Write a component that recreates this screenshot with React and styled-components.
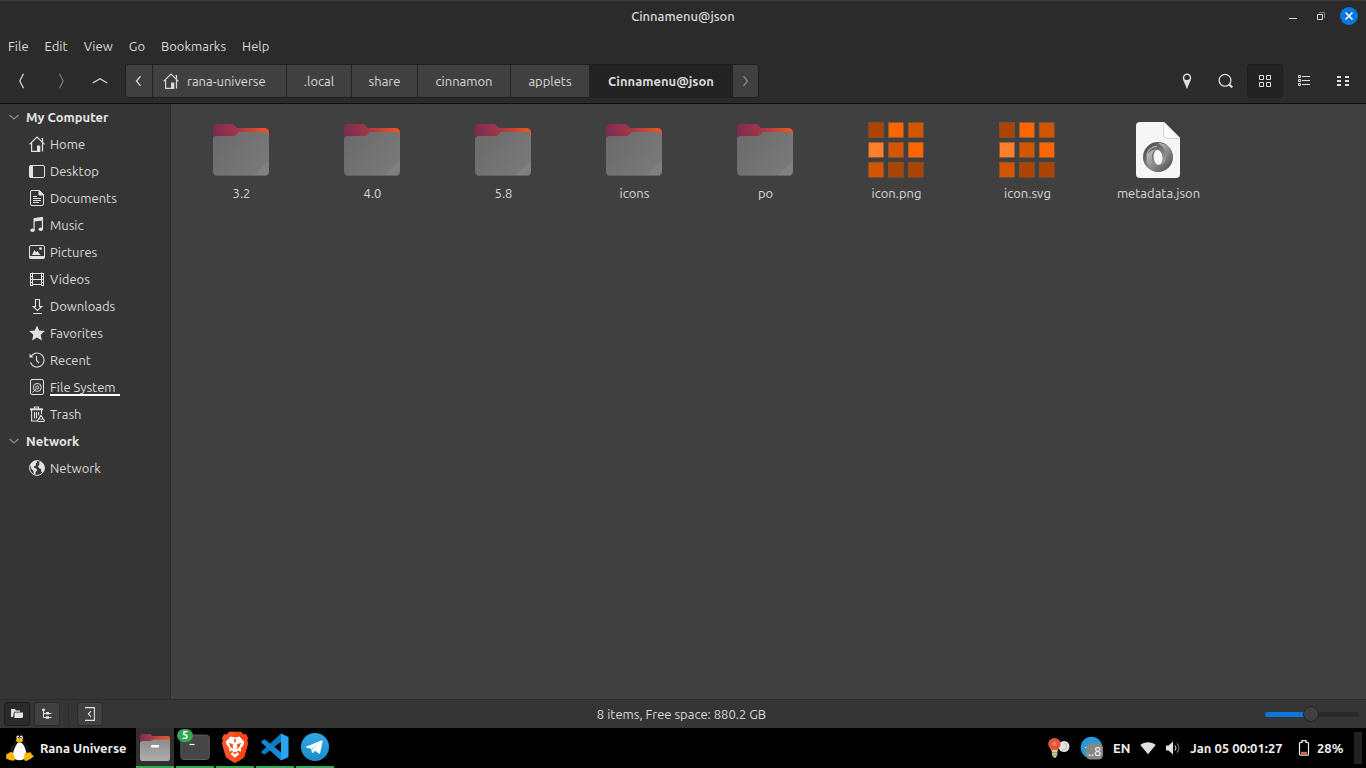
import React, { useState } from "react";
import styled, { createGlobalStyle, css } from "styled-components";

const GlobalStyle = createGlobalStyle`
  *, *::before, *::after { box-sizing: border-box; }
  body {
    margin: 0;
    background: #404040;
    color: #dadada;
    font-family: "Ubuntu", "Noto Sans", sans-serif;
    font-size: 13px;
    line-height: 20px;
  }
  button, input { font: inherit; color: inherit; }
  button { border: 0; padding: 0; background: none; cursor: default; }
  a { color: inherit; text-decoration: none; cursor: default; }
  svg { display: block; flex: none; }
`;

const Desktop = styled.div`
  display: flex;
  flex-direction: column;
  min-height: 100vh;
`;

const Header = styled.header`
  background: #2b2b2b;
  border-top: 1px solid #3a3a3a;
  border-bottom: 1px solid #0e0e0e;
`;

const TitleBar = styled.div`
  display: grid;
  grid-template-columns: 1fr auto 1fr;
  align-items: center;
  height: 31px;
  padding: 0 8px 1px;
`;

const WindowTitle = styled.h1`
  grid-column: 2;
  margin: 0;
  font-size: 13px;
  font-weight: 500;
  line-height: 20px;
`;

const WindowControls = styled.div`
  display: flex;
  justify-content: flex-end;
  gap: 10px;
`;

const WindowButton = styled.button`
  display: grid;
  place-items: center;
  width: 18px;
  height: 18px;
  border-radius: 50%;
  background: ${(p) => (p.$close ? "#0c75de" : "transparent")};
`;

const MenuBar = styled.nav`
  display: flex;
  align-items: center;
  height: 28px;
  padding: 0 8px;
  gap: 16px;
`;

const MenuButton = styled.button`
  text-align: left;
  white-space: nowrap;
`;

const Toolbar = styled.div`
  display: flex;
  align-items: center;
  height: 43px;
  padding: 0 5px 2px 4px;
`;

const ToolGroup = styled.div`
  display: flex;
  gap: 3px;
`;

const ToolButton = styled.button`
  display: grid;
  place-items: center;
  width: 36px;
  height: 34px;
  border: 1px solid ${(p) => (p.$on ? "#1f1f1f" : "transparent")};
  border-radius: 3px;
  background: ${(p) => (p.$on ? "#232323" : "transparent")};
  color: ${(p) => (p.disabled ? "#7d7d7d" : "#dedede")};
`;

const Breadcrumb = styled.nav`
  display: flex;
  height: 34px;
  margin: 0 auto 0 7px;
  border: 1px solid #1f1f1f;
  border-radius: 3px;
  overflow: hidden;
`;

const Crumb = styled.button`
  display: flex;
  align-items: center;
  justify-content: ${(p) => (p.$icon ? "flex-start" : "center")};
  gap: 8px;
  width: ${(p) => p.$width}px;
  padding-left: ${(p) => (p.$icon ? 10 : 0)}px;
  background: ${(p) => (p.$current ? "#232323" : "#404040")};
  font-weight: ${(p) => (p.$current ? 700 : 400)};
  color: ${(p) => (p.disabled ? "#8c8c8c" : "#dadada")};
  white-space: nowrap;
  & + & { border-left: 1px solid #232323; }
`;

const Workspace = styled.div`
  display: flex;
  flex: 1;
`;

const Sidebar = styled.aside`
  flex: none;
  width: 171px;
  border-right: 1px solid #2b2b2b;
  background: #353535;
`;

const SideHeading = styled.h2`
  display: flex;
  align-items: center;
  gap: 6px;
  height: 27px;
  margin: 0;
  padding: 0 0 1px 8px;
  font-size: 13px;
  font-weight: 700;
  color: #e4e4e4;
  svg { color: #8f8f8f; }
`;

const PlaceList = styled.ul`
  margin: 0;
  padding: 0;
  list-style: none;
`;

const PlaceLink = styled.a`
  display: flex;
  align-items: center;
  gap: 5px;
  height: 27px;
  padding: 0 0 1px 29px;
  svg { color: #e2e2e2; }
`;

const PlaceName = styled.span`
  ${(p) =>
    p.$usage &&
    css`
      width: 70px;
      height: 18px;
      line-height: 18px;
      border-bottom: 2px solid #ffffff;
    `}
`;

const FileGrid = styled.main`
  flex: 1;
  display: grid;
  grid-template-columns: repeat(auto-fill, 131px);
  align-content: start;
  padding: 14px 5px;
  background: #404040;
`;

const FileItem = styled.a`
  display: flex;
  flex-direction: column;
  align-items: center;
  gap: 1px;
  height: 90px;
  svg { margin-right: 1px; }
`;

const StatusBar = styled.footer`
  display: grid;
  grid-template-columns: 1fr auto 1fr;
  align-items: center;
  height: 29px;
  padding: 0 7px 0 4px;
  border-top: 1px solid #2d2d2d;
  background: #353535;
`;

const StatusTools = styled.div`
  display: flex;
  align-items: center;
  gap: 4px;
`;

const StatusButton = styled.button`
  display: grid;
  place-items: center;
  width: 26px;
  height: 24px;
  border: 1px solid ${(p) => (p.$on ? "#1c1c1c" : "#292929")};
  border-radius: 3px;
  background: ${(p) => (p.$on ? "#2b2b2b" : "#404040")};
  color: #e2e2e2;
`;

const Separator = styled.span`
  width: 1px;
  height: 23px;
  margin: 0 4px;
  background: #2d2d2d;
`;

const ZoomSlider = styled.input`
  justify-self: end;
  appearance: none;
  width: 94px;
  height: 16px;
  margin: 0;
  background: transparent;
  &::-webkit-slider-runnable-track {
    height: 5px;
    border-radius: 3px;
    background: linear-gradient(to right, #0c75de 50%, #292929 50%);
  }
  &::-webkit-slider-thumb {
    appearance: none;
    width: 16px;
    height: 16px;
    margin-top: -6px;
    border: 1px solid #222222;
    border-radius: 50%;
    background: #404040;
  }
`;

const Panel = styled.div`
  display: flex;
  justify-content: space-between;
  height: 40px;
  background: #000000;
  color: #ededed;
  font-weight: 600;
`;

const PanelStart = styled.div`
  display: flex;
  gap: 2px;
`;

const StartButton = styled.button`
  display: flex;
  align-items: center;
  gap: 5px;
  width: 134px;
  padding-left: 5px;
  font-weight: 600;
  white-space: nowrap;
`;

const TaskButton = styled.button`
  position: relative;
  display: grid;
  place-items: center;
  width: 38px;
  border-bottom: 2px solid #35a854;
  background: ${(p) => (p.$active ? "#303030" : "transparent")};
`;

const WindowCount = styled.span`
  position: absolute;
  top: 1px;
  left: 1px;
  width: 16px;
  height: 13px;
  border-radius: 7px;
  background: #35a854;
  color: #ffffff;
  font-size: 11px;
  line-height: 13px;
  text-align: center;
`;

const Tray = styled.div`
  display: flex;
  align-items: center;
  gap: 9px;
  padding-right: 4px;
`;

const TrayText = styled.span`
  width: ${(p) => p.$width}px;
  white-space: nowrap;
`;

const TrayButton = styled.button`
  display: flex;
  align-items: center;
  gap: 7px;
  font-weight: 600;
  text-align: left;
`;

const ShowDesktop = styled.button`
  width: 8px;
  height: 32px;
  background: #222222;
`;

/* ---------- symbolic icons ---------- */

const Line = ({ w = 16, h = 16, sw = 1.2, children, ...rest }) => (
  <svg
    width={w}
    height={h}
    viewBox={`0 0 ${w} ${h}`}
    fill="none"
    stroke="currentColor"
    strokeWidth={sw}
    aria-hidden="true"
    {...rest}
  >
    {children}
  </svg>
);

const HomeIcon = () => (
  <Line>
    <path d="M.5 8.400 8 1l7.500 7.400M12.500 2.500h1v3.500" />
    <path d="M2.600 6.800v8.600h5.900M13.500 6.800v8.700" />
    <path d="M8 9.500h3.300V16H8z" fill="currentColor" stroke="none" />
  </Line>
);

const DesktopIcon = () => (
  <Line sw={1}>
    <rect x=".5" y="2.500" width="15" height="12" rx="1.500" />
    <path d="M2 2h2v13H2a1.500 1.500 0 0 1-1.500-1.500v-10A1.500 1.500 0 0 1 2 2z" fill="currentColor" stroke="none" />
  </Line>
);

const DocumentIcon = () => (
  <Line sw={1}>
    <path d="M3 .5h7.500l4 4V14a1.500 1.500 0 0 1-1.500 1.500H3A1.500 1.500 0 0 1 1.500 14V2A1.500 1.500 0 0 1 3 .5z" />
    <path d="M10 .5v4.500h4.500z" fill="currentColor" />
    <path d="M4 6.500h4M4 8.500h8M4 10.500h8M4 12.500h6" />
  </Line>
);

const MusicIcon = () => (
  <Line sw={1.2}>
    <path d="M5.100 13V1.800l8.300-1.300V12" />
    <path d="M5 1.300 14 .2v3.300L5 4.600z" fill="currentColor" stroke="none" />
    <ellipse cx="3.500" cy="13.300" rx="2.200" ry="1.800" fill="currentColor" stroke="none" />
    <ellipse cx="11.800" cy="12.200" rx="2.200" ry="1.800" fill="currentColor" stroke="none" />
  </Line>
);

const PictureIcon = () => (
  <Line sw={1}>
    <rect x=".5" y="1.500" width="15" height="12.500" rx="1.500" />
    <path d="M.5 12.500h15v1a1 1 0 0 1-1 1h-13a1 1 0 0 1-1-1z" fill="currentColor" />
    <path d="m3 11 2.500-5 1.700 2.200L8.500 7l3 4z" fill="currentColor" stroke="none" />
    <circle cx="11.500" cy="4.600" r="1.400" fill="currentColor" stroke="none" />
  </Line>
);

const VideoIcon = () => (
  <Line sw={1}>
    <path d="M3.500 1.500v13M12.500 1.500v13M3.500 2.500h9M3.500 8.500h9M3.500 13.500h9" />
    <path d="M1.500 2v13M14.500 2v13" />
    <path d="M1 2.500h3M1 5.500h3M1 8.500h3M1 11.500h3M1 14.500h3M12 2.500h3M12 5.500h3M12 8.500h3M12 11.500h3M12 14.500h3" />
  </Line>
);

const DownloadIcon = () => (
  <Line sw={1.1}>
    <path d="M6.500 1.500h4v7h2.300l-4.300 4-4.300-4h2.300zM4 15.500h9" />
  </Line>
);

const StarIcon = () => (
  <Line>
    <path d="m8 .4 2.200 5 5.600.6-4.100 3.800 1.200 5.700L8 12.600l-4.900 2.900 1.200-5.700L.2 6l5.600-.6z" fill="currentColor" stroke="none" />
  </Line>
);

const RecentIcon = () => (
  <Line sw={1.1}>
    <path d="M2.500 3.800A7 7 0 1 1 1.500 10.500" />
    <path d="M.5 1.800v3.700h4z" fill="currentColor" stroke="none" />
    <path d="M7.500 4v4.500l2.500 2.500" />
  </Line>
);

const DiskIcon = () => (
  <Line sw={1}>
    <rect x="1.500" y=".5" width="13" height="15" rx="1.500" />
    <circle cx="8.300" cy="8.400" r="4" />
    <circle cx="8.300" cy="8.400" r="1.500" />
    <path d="m3.500 13.500 3.300-3.300" />
  </Line>
);

const TrashIcon = () => (
  <Line sw={1.1}>
    <path d="M5.500 2.800V1h4v1.800" />
    <path d="M1 2.300h13v2H1z" fill="currentColor" stroke="none" />
    <path d="M2.600 4v11h5.600M12.500 4v4M5.500 6v6.500M7.500 6v6.500M9.600 6v3.500" />
    <path d="m12 9.200 1.800 3 1.700 2.500-1 .9H9.300l-.8-1 1.600-2.600zM9.500 12.500l2 .7M13.800 12.200l-1.400 1.500" />
  </Line>
);

const GlobeIcon = () => (
  <Line sw={1}>
    <circle cx="8" cy="8" r="7.400" />
    <path d="M1.200 5C2.300 2.500 4.800.8 7.500.8l.7 1.600-1.500 1.200.6 1.300-1.900 1.300-.5 1.500 2.300.7 1 1.800-1.500 1.700-.4 2.700-1.500-.7-.3-3-2-2z" fill="currentColor" stroke="none" />
    <path d="m10 2.300 2.300-.3c2 1.300 3.200 3.600 3.200 6 0 1.900-.8 3.700-2 5l-1.300-1.500-.2-2.500-2-.7-1-2 1.400-1.600z" fill="currentColor" stroke="none" />
  </Line>
);

const ExpanderIcon = () => (
  <Line w={12} h={12} sw={1.1}>
    <path d="m1.500 4 4.500 4 4.500-4" />
  </Line>
);

const BackIcon = () => (
  <Line sw={1.2}>
    <path d="M9.500.8 5.800 8l3.700 7.200" />
  </Line>
);
const ForwardIcon = () => (
  <Line sw={1.2}>
    <path d="M6.500.8 10.200 8l-3.700 7.200" />
  </Line>
);
const UpIcon = () => (
  <Line sw={1.2}>
    <path d="M.8 10 8 5.800l7.200 4.200" />
  </Line>
);
const CrumbBackIcon = () => (
  <Line w={10} h={12} sw={1.3}>
    <path d="M6.500 1.200 2.500 6l4 4.800" />
  </Line>
);
const CrumbNextIcon = () => (
  <Line w={10} h={12} sw={1.2}>
    <path d="m2.500 1.200 4 4.800-4 4.800" />
  </Line>
);

const PinIcon = () => (
  <Line>
    <path d="M8 .5a4.200 4.200 0 0 1 4.200 4.300C12.200 8 9.500 11 8.500 15.500h-1C6.500 11 3.800 8 3.800 4.800A4.200 4.200 0 0 1 8 .5zM8 2a2.700 2.700 0 0 0-2.700 2.700C5.300 6 6 7 8 7s2.700-1 2.700-2.300A2.700 2.700 0 0 0 8 2z" fill="currentColor" stroke="none" fillRule="evenodd" />
  </Line>
);

const SearchIcon = () => (
  <Line sw={1.3}>
    <circle cx="7" cy="7.300" r="5.900" />
    <path d="m11.300 11.500 3 3" strokeWidth="2" />
  </Line>
);

const GridIcon = () => (
  <Line sw={1}>
    <path d="M2.500 2.500h4v4h-4zM9.500 2.500h4v4h-4zM2.500 9.500h4v4h-4zM9.500 9.500h4v4h-4z" />
  </Line>
);

const ListIcon = () => (
  <Line sw={1}>
    <path d="M2.500 2.500h2v2h-2zM2.500 6.500h2v2h-2zM2.500 10.500h2v2h-2zM6 3.500h8M6 7.500h8M6 11.500h8" />
  </Line>
);

const CompactIcon = () => (
  <Line sw={2}>
    <path d="M2 4h4M2 8h4M2 12h4M10 4h4M10 8h4M10 12h4" />
  </Line>
);

const MinimizeIcon = () => (
  <Line w={10} h={10}>
    <path d="M1 7h8v1H1z" fill="currentColor" stroke="none" />
  </Line>
);
const RestoreIcon = () => (
  <Line w={10} h={10} sw={1}>
    <path d="M1.500 3.500h5v5h-5z" />
    <path d="M3 1.500h5.500V7" stroke="#848484" />
  </Line>
);
const CloseIcon = () => (
  <Line w={10} h={10} sw={1.5}>
    <path d="m1.500 1.500 7 7M8.500 1.500l-7 7" stroke="#ffffff" />
  </Line>
);

const PlacesIcon = () => (
  <Line w={12} h={12}>
    <path d="M0 1h4l1 1.500h4v1.200H3L2 9H0z" fill="currentColor" stroke="none" />
    <path d="M3.500 4.500H12V9l-.8 1H3.300z" fill="currentColor" stroke="none" />
  </Line>
);
const TreeIcon = () => (
  <Line w={12} h={12} sw={1}>
    <path d="M2.500 1v8.500H5M2.500 5.500H5M6 5.500h4.500M6 9.500h4.500" />
    <path d="M1 .8h3v2H1zM5 4h3v2.500H5zM5 8.200h3v2.500H5z" fill="currentColor" stroke="none" />
  </Line>
);
const HidePaneIcon = () => (
  <Line w={12} h={14} sw={1.1}>
    <path d="M1 .6h9.400v12.800H1M7 4.200 4.300 7 7 9.800" />
  </Line>
);

/* ---------- file icons ---------- */

const FolderIcon = () => (
  <svg width="64" height="64" viewBox="0 0 64 64" aria-hidden="true">
    <defs>
      <linearGradient id="folderBack" x1="4" y1="22" x2="60" y2="8" gradientUnits="userSpaceOnUse">
        <stop offset="0" stopColor="#772953" />
        <stop offset=".45" stopColor="#a23748" />
        <stop offset="1" stopColor="#f05a22" />
      </linearGradient>
      <linearGradient id="folderFront" x1="4" y1="16" x2="60" y2="58" gradientUnits="userSpaceOnUse">
        <stop offset="0" stopColor="#6a6a6a" />
        <stop offset="1" stopColor="#7b7b7b" />
      </linearGradient>
    </defs>
    <path d="M8 6h14.500c1.600 0 2.300.7 3.200 1.800L28 10h27.500a4.500 4.500 0 0 1 4.500 4.500V28H4V10a4 4 0 0 1 4-4z" fill="url(#folderBack)" />
    <path d="M7.500 18H24c1.500 0 2.400-.4 3.300-1.300l1.500-1.500c.9-.8 1.700-1.200 3-1.200h23.700a4.500 4.500 0 0 1 4.500 4.500v35a4.500 4.500 0 0 1-4.500 4.500h-47A4.500 4.500 0 0 1 4 53.500v-32A3.500 3.500 0 0 1 7.500 18z" fill="url(#folderFront)" />
    <path d="M60 42v11.500a4.500 4.500 0 0 1-4.500 4.500H44z" fill="#808080" />
    <path d="M4 53.300A4.500 4.500 0 0 0 8.500 57.600h47a4.500 4.500 0 0 0 4.500-4.300" fill="none" stroke="#5c5c5c" strokeWidth=".8" />
  </svg>
);

const TILE_COLORS = [
  "#aa4400", "#ff6600", "#d45500",
  "#ff7f2a", "#d45500", "#ff6600",
  "#d45500", "#aa4400", "#aa4400",
];

const TilesIcon = () => (
  <svg width="64" height="64" viewBox="0 0 64 64" aria-hidden="true">
    {TILE_COLORS.map((color, i) => (
      <rect
        key={i}
        x={4.6 + (i % 3) * 19.8}
        y={4.6 + Math.floor(i / 3) * 19.8}
        width="15"
        height="15"
        fill={color}
        stroke="#8a5a35"
        strokeWidth=".5"
      />
    ))}
  </svg>
);

const JsonIcon = () => (
  <svg width="64" height="64" viewBox="0 0 64 64" aria-hidden="true">
    <defs>
      <linearGradient id="jsonA" x1="20" y1="28" x2="42" y2="52" gradientUnits="userSpaceOnUse">
        <stop offset="0" stopColor="#4c4c4c" />
        <stop offset="1" stopColor="#b5b5b5" />
      </linearGradient>
      <linearGradient id="jsonB" x1="44" y1="48" x2="24" y2="28" gradientUnits="userSpaceOnUse">
        <stop offset="0" stopColor="#5c5c5c" />
        <stop offset="1" stopColor="#c8c8c8" />
      </linearGradient>
    </defs>
    <path d="M14 4h24l16 16v36a4 4 0 0 1-4 4H14a4 4 0 0 1-4-4V8a4 4 0 0 1 4-4z" fill="#f6f6f6" />
    <path d="M38 4l16 16H42a4 4 0 0 1-4-4z" fill="#fdfdfd" />
    <path d="M37.700 4v12a4.300 4.300 0 0 0 4.300 4.300h12" fill="none" stroke="#cfcfcf" strokeWidth=".9" />
    <circle cx="32" cy="39" r="15" fill="url(#jsonA)" />
    <path d="M32 31c-4 0-6 4-6 8s2.500 8.500 6 8.500 8.500-3 8.500-9c0-5-3-10-8.500-13.500 8 0 15 5.500 15 14S40 54 32 54s-11.500-7-11.500-13C20.500 35 26 31 32 31z" fill="url(#jsonB)" />
    <path d="M21 38c0-5.500 4.500-9.700 10-9.700" fill="none" stroke="#b0b0b0" strokeWidth="1.200" />
    <ellipse cx="32" cy="39.300" rx="4.400" ry="7.600" fill="#f6f6f6" transform="rotate(-6 32 39)" />
  </svg>
);

/* ---------- panel icons ---------- */

const PenguinIcon = () => (
  <svg width="30" height="30" viewBox="0 0 30 30" aria-hidden="true">
    <path d="M11 5c0-3 1.500-4.500 4-4.500S19 2.500 19 5.500c0 3 6 8 6 15 0 4-4 7-9.500 7S6 25 6 20C6 13 11 9 11 5z" fill="#111111" />
    <path d="M14.500 9.500c3 0 4 2 5.200 5 1.400 3.600 2.300 6.500 1 9.500-1 2.400-3.700 3.200-6.200 3.200S9.300 26.400 8.300 24c-1-2.700.2-6.500 1.700-9.500 1.400-2.800 2-5 4.500-5z" fill="#ffffff" />
    <ellipse cx="12.800" cy="4.400" rx="1.400" ry="1.900" fill="#e9e9e9" />
    <ellipse cx="16.300" cy="4.400" rx="1.500" ry="2" fill="#e9e9e9" />
    <circle cx="13.200" cy="4.600" r=".7" fill="#000000" />
    <circle cx="16" cy="4.600" r=".7" fill="#000000" />
    <path d="M10.800 7c1.200-1.300 2.200-1.800 3.600-1.800 1.500 0 3 .8 4 1.800-.9 1.800-2.400 2.800-4 2.800S11.500 8.800 10.800 7z" fill="#f5b400" />
    <path d="M3 20.500c1.500-.6 2.500-2 3.700-1.600C8.200 19.500 9.600 23 10 25c.4 2-1 3-3 2.600-2-.4-4-1.200-5.200-1.500-1-.3-.6-1.700-.5-2.600.1-1-.8-2.400 1.700-3z" fill="#f9b903" />
    <path d="M19.600 21c.2-2 1.500-1.700 2.600-1.300 1.400.5 2.400-.3 3.300-.4 1.200.8.700 1.700 1.500 2.400.8.700 2 1 1.600 1.800-1 1.500-4.600 3-6.100 4-1.700 1-3.400.2-3.400-1.800 0-1.600.4-3.200.5-4.700z" fill="#f9b903" />
    <path d="M8.500 12c-1.500 2.300-2.500 4-2.600 6" stroke="#444444" strokeWidth=".7" fill="none" />
  </svg>
);

const FilesIcon = () => (
  <svg width="32" height="30" viewBox="0 0 32 30" aria-hidden="true">
    <defs>
      <linearGradient id="filesBack" x1="0" x2="1">
        <stop offset="0" stopColor="#7b2b52" />
        <stop offset="1" stopColor="#ee5825" />
      </linearGradient>
      <linearGradient id="filesFront" x2="0" y2="1">
        <stop offset="0" stopColor="#8d8d8d" />
        <stop offset="1" stopColor="#aeaeae" />
      </linearGradient>
    </defs>
    <path d="M3 2h8.500l2 2H29a2 2 0 0 1 2 2v6H1V4a2 2 0 0 1 2-2z" fill="url(#filesBack)" />
    <path d="M3.500 9H12l2-1.500h14.500A2.500 2.500 0 0 1 31 10v16.500a2.500 2.500 0 0 1-2.500 2.500h-25A2.500 2.500 0 0 1 1 26.500v-15A2.500 2.500 0 0 1 3.500 9z" fill="url(#filesFront)" />
    <rect x="12" y="13" width="8" height="2.500" rx=".7" fill="#ffffff" />
  </svg>
);

const TerminalIcon = () => (
  <svg width="30" height="28" viewBox="0 0 30 28" aria-hidden="true">
    <rect x=".8" y="2" width="28.500" height="24.500" rx="3" fill="#464646" stroke="#5b5b5b" />
    <path d="M9.500 11.500h5" stroke="#ffffff" strokeWidth="1.200" />
  </svg>
);

const BraveIcon = () => (
  <svg width="28" height="32" viewBox="0 0 28 32" aria-hidden="true">
    <path d="m8 .8 12 0 2.400 2.800 2.600-.3 2 3.700-.8 2.700.9 2.600-3.700 13.300c-.4 1.400-4.700 4-9.400 6.400-4.700-2.400-9-5-9.400-6.400L.9 12.300l.9-2.600L1 7l2-3.700 2.600.3z" fill="#fb542b" />
    <path d="M14 .8h6l2.400 2.800 2.600-.3 2 3.700-.8 2.700.9 2.600-3.700 13.300c-.4 1.400-4.700 4-9.400 6.400z" fill="#ff3a08" opacity=".65" />
    <path d="m9.500 5.500 4.500 1 4.500-1 4.800 5.300-.7 3.200-2.800 3.400.5 1.800-1 1.500-2.300-1.200-1.200 1.200 2.500 2.300-4.300 3.700-4.300-3.700 2.500-2.300-1.200-1.200L9 20.500 8 19l.5-1.800-2.800-3.400-.9-3z" fill="#ffffff" />
    <path d="m8 11.800 4.300 1.700-.8 1.800 1 3-3-2.300zM20 11.800l-4.300 1.700.8 1.800-1 3 3-2.300z" fill="#fb4a20" />
    <path d="m11.500 21.800 2.500-1.100 2.500 1.100-2.500 1.400z" fill="#fb4a20" />
    <path d="m12.900 8 1.100.6 1.100-.6-.5 3.500h-1.200z" fill="#fb4a20" />
  </svg>
);

const CodeIcon = () => (
  <svg width="30" height="30" viewBox="0 0 30 30" aria-hidden="true">
    <path d="M21 1.500 1.600 19.200a1 1 0 0 0 0 1.500L3.400 22.300c.4.4 1 .4 1.400.1L21.300 9.500z" fill="#0b78c2" />
    <path d="M21 28.500 1.600 10.800a1 1 0 0 1 0-1.500L3.400 7.700c.4-.4 1-.4 1.400-.1l16.500 12.900z" fill="#1487d4" />
    <path d="M21 1.500 28.500 5v20L21 28.500z" fill="#2ba5ef" />
  </svg>
);

const TelegramIcon = () => (
  <svg width="30" height="30" viewBox="0 0 30 30" aria-hidden="true">
    <defs>
      <linearGradient id="tgBlue" x2="0" y2="1">
        <stop offset="0" stopColor="#2fa9e2" />
        <stop offset="1" stopColor="#1c8ccb" />
      </linearGradient>
    </defs>
    <circle cx="15" cy="15" r="14" fill="url(#tgBlue)" />
    <path d="m6 14.800 15.300-6.200c.8-.3 1.400.2 1.200 1.100L20.200 20.800c-.2.9-.8 1.100-1.500.7L15 18.800l-2 1.900c-.5.4-.9.300-1-.4l-.9-3.600-4.900-1.200c-.7-.2-.7-.5-.2-.7z" fill="#ffffff" />
    <path d="m11.200 16.700 7.700-5.200-6.200 6-.7 3z" fill="#b7d8ee" />
  </svg>
);

const BulbIcon = () => (
  <svg width="23" height="22" viewBox="0 0 23 22" aria-hidden="true">
    <defs>
      <radialGradient id="bulbRed" cx=".5" cy=".45" r=".55">
        <stop offset="0" stopColor="#f0907c" />
        <stop offset=".55" stopColor="#dd4a30" />
        <stop offset="1" stopColor="#f0714f" />
      </radialGradient>
    </defs>
    <circle cx="16" cy="9.500" r="5.500" fill="#e3e3e1" />
    <path d="m16 6 3 2-1 4-4 1" stroke="#bdbdbd" fill="none" />
    <path d="M6.500 1A6.200 6.200 0 0 1 12.700 7.300c0 3.200-2.700 4.200-3.200 6.700h-6C3 11.500.3 10.500.3 7.300A6.200 6.200 0 0 1 6.500 1z" fill="url(#bulbRed)" />
    <path d="M3.600 13h6l-.5 5.500-1.500 2.300H6l-1.800-2.300z" fill="#d8cc8e" />
    <path d="M4 15.500h5.500M4.300 18h5" stroke="#8e875c" strokeWidth=".8" />
  </svg>
);

const TrayTelegramIcon = () => (
  <svg width="24" height="24" viewBox="0 0 24 24" aria-hidden="true">
    <circle cx="11.500" cy="11.500" r="10.800" fill="#2799d8" />
    <path d="m4.500 11.500 3-1.300v2.500z" fill="#ffffff" />
    <rect x="6" y="7.500" width="17" height="16" rx="4.500" fill="#878787" />
    <text x="14.500" y="20" textAnchor="middle" fontSize="12" fontWeight="400" fill="#ffffff" fontFamily="Open Sans, sans-serif">..8</text>
  </svg>
);

const WifiIcon = () => (
  <Line>
    <path d="M.3 5C4.800 1.200 11.200 1.200 15.700 5L8 14.300z" fill="#e0e0e0" stroke="none" />
  </Line>
);

const SpeakerIcon = () => (
  <Line sw={1.1}>
    <path d="M1 5.500h2.500L8 1.500v13l-4.500-4H1z" fill="#e0e0e0" stroke="none" />
    <path d="M9.800 5.500c1.300 1.400 1.300 3.600 0 5" stroke="#d5d5d5" />
    <path d="M12 3.300c2.500 2.700 2.500 6.700 0 9.400" stroke="#777777" />
  </Line>
);

const BatteryIcon = () => (
  <Line w={12} h={16} sw={1.2}>
    <path d="M4 .7h4v1.700h1.500a1 1 0 0 1 1 1v10.800a1 1 0 0 1-1 1h-7a1 1 0 0 1-1-1V3.400a1 1 0 0 1 1-1H4z" />
    <path d="M3 11.800h6V14H3z" fill="#e86a33" stroke="none" />
  </Line>
);

/* ---------- data ---------- */

const MENUS = ["File", "Edit", "View", "Go", "Bookmarks", "Help"];

const CRUMBS = [
  { label: "rana-universe", width: 134, icon: <HomeIcon /> },
  { label: ".local", width: 65 },
  { label: "share", width: 66 },
  { label: "cinnamon", width: 93 },
  { label: "applets", width: 79 },
  { label: "Cinnamenu@json", width: 143, current: true },
];

const PLACES = [
  {
    title: "My Computer",
    items: [
      ["Home", HomeIcon],
      ["Desktop", DesktopIcon],
      ["Documents", DocumentIcon],
      ["Music", MusicIcon],
      ["Pictures", PictureIcon],
      ["Videos", VideoIcon],
      ["Downloads", DownloadIcon],
      ["Favorites", StarIcon],
      ["Recent", RecentIcon],
      ["File System", DiskIcon],
      ["Trash", TrashIcon],
    ],
  },
  { title: "Network", items: [["Network", GlobeIcon]] },
];

const FILES = [
  ["3.2", FolderIcon],
  ["4.0", FolderIcon],
  ["5.8", FolderIcon],
  ["icons", FolderIcon],
  ["po", FolderIcon],
  ["icon.png", TilesIcon],
  ["icon.svg", TilesIcon],
  ["metadata.json", JsonIcon],
];

const TASKS = [
  { label: "Files", Icon: FilesIcon, active: true },
  { label: "Terminal", Icon: TerminalIcon, count: 5 },
  { label: "Brave", Icon: BraveIcon },
  { label: "Visual Studio Code", Icon: CodeIcon },
  { label: "Telegram", Icon: TelegramIcon },
];

export default function App() {
  const [zoom, setZoom] = useState(49);

  return (
    <Desktop>
      <GlobalStyle />
      <Header>
        <TitleBar>
          <WindowTitle>Cinnamenu@json</WindowTitle>
          <WindowControls>
            <WindowButton aria-label="Minimize"><MinimizeIcon /></WindowButton>
            <WindowButton aria-label="Restore"><RestoreIcon /></WindowButton>
            <WindowButton aria-label="Close" $close><CloseIcon /></WindowButton>
          </WindowControls>
        </TitleBar>
        <MenuBar aria-label="Menu">
          {MENUS.map((m) => <MenuButton key={m}>{m}</MenuButton>)}
        </MenuBar>
        <Toolbar>
          <ToolGroup>
            <ToolButton aria-label="Back"><BackIcon /></ToolButton>
            <ToolButton aria-label="Forward" disabled><ForwardIcon /></ToolButton>
            <ToolButton aria-label="Up"><UpIcon /></ToolButton>
          </ToolGroup>
          <Breadcrumb aria-label="Path">
            <Crumb $width={26} aria-label="Scroll path left"><CrumbBackIcon /></Crumb>
            {CRUMBS.map((c) => (
              <Crumb key={c.label} $width={c.width} $current={c.current} $icon={Boolean(c.icon)}>
                {c.icon}
                {c.label}
              </Crumb>
            ))}
            <Crumb $width={26} disabled aria-label="Scroll path right"><CrumbNextIcon /></Crumb>
          </Breadcrumb>
          <ToolGroup>
            <ToolButton aria-label="Toggle location entry"><PinIcon /></ToolButton>
            <ToolButton aria-label="Search"><SearchIcon /></ToolButton>
            <ToolButton aria-label="Icon view" $on><GridIcon /></ToolButton>
            <ToolButton aria-label="List view"><ListIcon /></ToolButton>
            <ToolButton aria-label="Compact view"><CompactIcon /></ToolButton>
          </ToolGroup>
        </Toolbar>
      </Header>

      <Workspace>
        <Sidebar>
          {PLACES.map((group) => (
            <section key={group.title}>
              <SideHeading><ExpanderIcon />{group.title}</SideHeading>
              <PlaceList>
                {group.items.map(([name, Icon]) => (
                  <li key={name}>
                    <PlaceLink href="#">
                      <Icon />
                      <PlaceName $usage={name === "File System"}>{name}</PlaceName>
                    </PlaceLink>
                  </li>
                ))}
              </PlaceList>
            </section>
          ))}
        </Sidebar>
        <FileGrid>
          {FILES.map(([name, Icon]) => (
            <FileItem href="#" key={name}>
              <Icon />
              <span>{name}</span>
            </FileItem>
          ))}
        </FileGrid>
      </Workspace>

      <StatusBar>
        <StatusTools>
          <StatusButton aria-label="Show places" $on><PlacesIcon /></StatusButton>
          <StatusButton aria-label="Show tree"><TreeIcon /></StatusButton>
          <Separator />
          <StatusButton aria-label="Hide sidebar"><HidePaneIcon /></StatusButton>
        </StatusTools>
        <span>8 items, Free space: 880.2 GB</span>
        <ZoomSlider
          type="range"
          aria-label="Zoom"
          min="0"
          max="100"
          value={zoom}
          onChange={(e) => setZoom(Number(e.target.value))}
        />
      </StatusBar>

      <Panel>
        <PanelStart>
          <StartButton><PenguinIcon />Rana Universe</StartButton>
          {TASKS.map(({ label, Icon, active, count }) => (
            <TaskButton key={label} aria-label={label} $active={active}>
              <Icon />
              {count && <WindowCount>{count}</WindowCount>}
            </TaskButton>
          ))}
        </PanelStart>
        <Tray>
          <TrayButton aria-label="Color temperature"><BulbIcon /></TrayButton>
          <TrayButton aria-label="Telegram"><TrayTelegramIcon /></TrayButton>
          <TrayText $width={18}>EN</TrayText>
          <TrayButton aria-label="Network"><WifiIcon /></TrayButton>
          <TrayButton aria-label="Volume"><SpeakerIcon /></TrayButton>
          <TrayText $width={99}>Jan 05 00:01:27</TrayText>
          <TrayButton>
            <BatteryIcon />
            <TrayText $width={28}>28%</TrayText>
          </TrayButton>
          <ShowDesktop aria-label="Show desktop" />
        </Tray>
      </Panel>
    </Desktop>
  );
}
